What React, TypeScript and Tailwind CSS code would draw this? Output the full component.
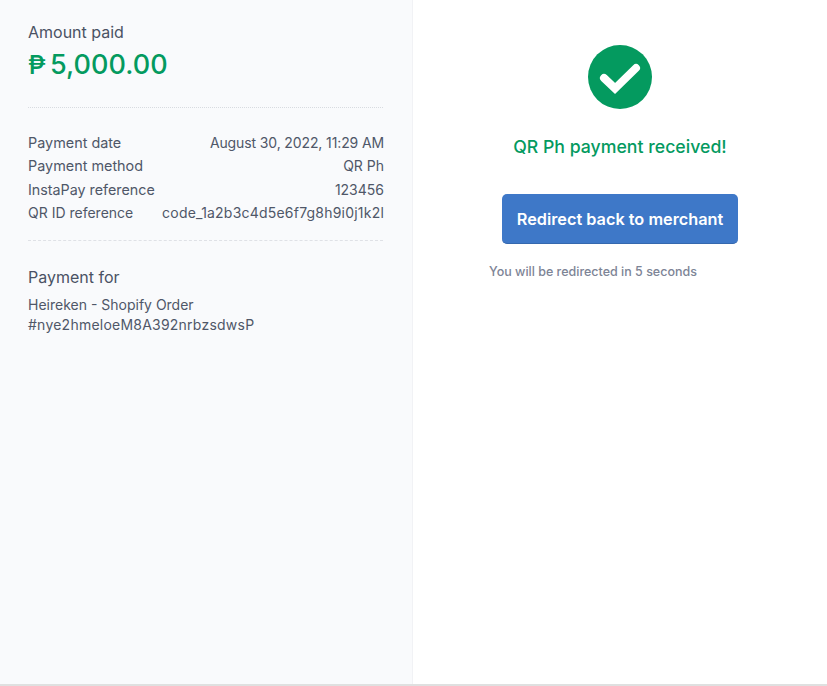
const details = [
  { label: 'Payment date', value: 'August 30, 2022, 11:29 AM', labelClass: 'text-[14.4px]', valueClass: 'tracking-[-0.12px]' },
  { label: 'Payment method', value: 'QR Ph', labelClass: 'text-[14.4px]', valueClass: '' },
  { label: 'InstaPay reference', value: '123456', labelClass: 'text-[14.3px]', valueClass: '' },
  { label: 'QR ID reference', value: 'code_1a2b3c4d5e6f7g8h9i0j1k2l', labelClass: 'text-[14px]', valueClass: 'tracking-[0.21px]' },
];

export default function App() {
  return (
    <div className="h-[686px] flex flex-col bg-white font-['Inter',sans-serif] overflow-hidden">
      <div className="flex flex-1 min-h-0">
        {/* summary */}
        <div className="w-[413px] shrink-0 bg-[#f9fafc] border-r border-[#f1f2f5] px-[28px] pt-[22px]">
          <p className="text-[16px] leading-[20px] font-normal text-[#4a5264]">Amount paid</p>
          <p className="mt-[4px] flex items-baseline text-[27px] leading-[38px] font-medium text-[#049a5f]">
            <span className="w-[22px] text-[26px]">₱</span>
            <span className="tracking-[0.05px]">5,000.00</span>
          </p>

          <div className="mt-[23px] mr-[1px] border-t border-dotted border-[#d8dbe0]" />

          <div className="mt-[23px] flex flex-col">
            {details.map((row) => (
              <div key={row.label} className="flex justify-between h-[23.33px] text-[14px] leading-[23px] text-[#4f5768]">
                <span className={row.labelClass}>{row.label}</span>
                <span className={row.valueClass}>{row.value}</span>
              </div>
            ))}
          </div>

          <div className="mt-[16px] mr-[1px] border-t border-dashed border-[#dfe1e6]" />

          <p className="mt-[25px] text-[16px] leading-[22px] font-normal text-[#4a5264]">Payment for</p>
          <p className="mt-[7px] text-[14px] leading-[20px] text-[#4f5768]">
            Heireken - Shopify Order
            <br />
            <span className="tracking-[0.23px]">#nye2hmeloeM8A392nrbzsdwsP</span>
          </p>
        </div>

        {/* status */}
        <div className="flex-1 flex flex-col items-center pt-[45px]">
          <svg width="64" height="64" viewBox="0 0 64 64" className="block">
            <circle cx="32" cy="32" r="32" fill="#049a5f" />
            <path d="M16 33L27 43.5L48 23" fill="none" stroke="#ffffff" strokeWidth="8" strokeLinecap="round" strokeLinejoin="miter" />
          </svg>
          <p className="mt-[26px] text-[17.7px] leading-[24px] font-medium text-[#049a5f]">QR Ph payment received!</p>
          <button className="mt-[35px] w-[236px] h-[50px] pt-[2px] rounded-[5px] bg-[#3e78c8] border-b border-[#3568ae] text-white text-[16.3px] font-semibold">
            Redirect back to merchant
          </button>
          <p className="mt-[19px] mr-[54px] text-[12.5px] leading-[18px] font-medium text-[#7d8496]">You will be redirected in 5 seconds</p>
        </div>
      </div>
      <div className="h-[2px] bg-[#dfe0e0]" />
    </div>
  );
}
